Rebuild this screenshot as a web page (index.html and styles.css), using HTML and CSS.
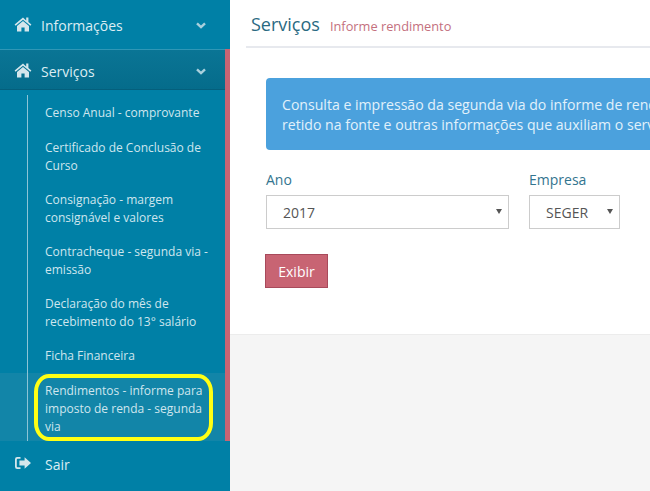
FILE: index.html
```html
<!DOCTYPE html>
<html lang="pt">
<head>
<meta charset="utf-8">
<title>Serviços</title>
<link rel="stylesheet" href="styles.css">
</head>
<body>
<div class="app">
  <aside class="sidebar">
    <a class="top first"><svg class="ico" viewBox="0 0 18 16"><path d="M9 1.6 0.6 8.6l1 1.2L9 3.7l7.4 6.1 1-1.2-3-2.5V1.5h-2.2v2.9z"/><path d="M9 5 3 10v5.4h4.4v-4h3.2v4H15V10z"/></svg><span class="lbl">Informações</span><svg class="chev" viewBox="0 0 10 7"><path d="M1 1.4 5 5.2l4-3.8" /></svg></a>
    <a class="top open"><svg class="ico" viewBox="0 0 18 16"><path d="M9 1.6 0.6 8.6l1 1.2L9 3.7l7.4 6.1 1-1.2-3-2.5V1.5h-2.2v2.9z"/><path d="M9 5 3 10v5.4h4.4v-4h3.2v4H15V10z"/></svg><span class="lbl">Serviços</span><svg class="chev" viewBox="0 0 10 7"><path d="M1 1.4 5 5.2l4-3.8" /></svg></a>
    <ul class="sub">
      <li class="lead">Censo Anual - comprovante</li>
      <li>Certificado de Conclusão de Curso</li>
      <li>Consignação - margem consignável e valores</li>
      <li>Contracheque - segunda via - emissão</li>
      <li>Declaração do mês de recebimento do 13° salário</li>
      <li>Ficha Financeira</li>
      <li class="active">Rendimentos - informe para imposto de renda - segunda via</li>
    </ul>
    <a class="top exit"><svg class="ico out" viewBox="0 0 18 16"><path d="M6.5 2H3.2A2.2 2.2 0 0 0 1 4.2v7.6A2.2 2.2 0 0 0 3.2 14h3.3v-1.8H3.6a.8.8 0 0 1-.8-.8V4.6c0-.4.4-.8.8-.8h2.9z"/><path d="M10.6 2.2 17 8l-6.4 5.8v-3.4H5.4V5.6h5.2z"/></svg><span class="lbl">Sair</span></a>
    <div class="mark"></div>
  </aside>
  <main class="main">
    <section class="panel">
      <header class="head"><h1>Serviços</h1><small>Informe rendimento</small></header>
      <div class="body">
        <div class="alert"><p>Consulta e impressão da segunda via do informe de rendimentos, com os valores do imposto de renda</p><p>retido na fonte e outras informações que auxiliam o servidor na declaração anual de ajuste</p></div>
        <div class="fields">
          <label class="field ano"><span>Ano</span><div class="selwrap"><select><option>2017</option></select></div></label>
          <label class="field emp"><span>Empresa</span><div class="selwrap"><select><option>SEGER</option></select></div></label>
        </div>
        <button class="btn" type="button">Exibir</button>
      </div>
    </section>
  </main>
</div>
</body>
</html>
```
FILE: styles.css
```css
* { box-sizing: border-box; }
html, body { margin: 0; height: 100%; overflow: hidden; }
body { font-family: "Open Sans", sans-serif; background: #f5f5f5; }
.app { display: flex; width: 650px; height: 491px; overflow: hidden; }
.sidebar { position: relative; flex: 0 0 230px; background: #0080a6; display: flex; flex-direction: column; }
.top { display: flex; align-items: center; padding-left: 14px; color: #dcedf3; font-size: 14px; }
.first { height: 49px; padding-top: 2px; }
.open { height: 41px; padding-top: 4px; border-top: 1px solid #2f97b6; border-bottom: 1px solid #045f7c; background: linear-gradient(#0a7595, #056c8b); }
.ico { width: 18px; height: 16px; fill: #d4e6ec; flex: none; margin-top: -4px; }
.lbl { margin-left: 9px; flex: 1; }
.chev { width: 10px; height: 7px; flex: none; margin-right: 24px; fill: none; stroke: #a9d0dd; stroke-width: 2.4; }
.sub { list-style: none; margin: 0 5px 0 0; padding: 7px 0 0; flex: 1; position: relative; color: #cfe6ee; font-size: 12px; line-height: 18px; }
.sub::before { content: ""; position: absolute; left: 27px; top: 5px; bottom: 0; width: 1px; background: #8cc4d6; z-index: 1; }
.sidebar::after { content: ""; position: absolute; left: 225px; top: 49px; width: 5px; height: 392px; background: #c86473; }
.sub li { padding: 8px 15px 8px 45px; }
.sub .lead { padding: 7px 15px 9px 45px; }
.sub .active { background: #1285a8; height: 68px; padding-top: 9px; }
.exit { height: 50px; flex: none; padding-bottom: 4px; }
.out { margin-top: -2px; }
.exit .lbl { margin-left: 13px; }
.mark { position: absolute; left: 34px; top: 374px; width: 179px; height: 67px; border: 4px solid #ffff14; border-radius: 15px / 18px; }
.main { flex: 1; min-width: 0; }
.panel { background: #fff; height: 335px; border-bottom: 1px solid #ececec; padding-left: 16px; overflow: hidden; }
.head { display: flex; align-items: baseline; height: 48px; border-bottom: 2px solid #e7e9ee; padding: 11px 0 0 5px; }
h1 { margin: 0; font-size: 18px; font-weight: 400; color: #2a6a82; line-height: 26px; }
small { margin-left: 10px; font-size: 12.8px; color: #c4707e; }
.body { padding: 30px 0 0 20px; }
.alert { width: 520px; height: 72px; background: #4ba1dd; border-radius: 4px; padding: 17px 16px 0; color: #e2f1fb; font-size: 14.1px; line-height: 20px; white-space: nowrap; overflow: hidden; }
.alert p { margin: 0; }
.fields { display: flex; gap: 20px; margin-top: 20px; }
.field { display: block; color: #33758f; font-size: 14px; line-height: 20px; }
.field > span { display: block; margin-bottom: 5px; }
.selwrap { position: relative; }
.selwrap::after { content: ""; position: absolute; right: 7px; top: 14px; border-left: 3px solid transparent; border-right: 3px solid transparent; border-top: 5px solid #555; pointer-events: none; }
select { display: block; height: 34px; width: 100%; border: 1px solid #ccc; background: #fff; color: #555; font: 14px "Open Sans", sans-serif; padding: 0 16px; border-radius: 0; appearance: none; }
.ano { width: 243px; }
.emp { width: 91px; }
.btn { display: block; margin: 25px 0 0 -1px; width: 63px; height: 34px; background: #c86473; border: 1px solid #a84a5b; color: #fff; font: 14px "Open Sans", sans-serif; padding: 0; }
```
